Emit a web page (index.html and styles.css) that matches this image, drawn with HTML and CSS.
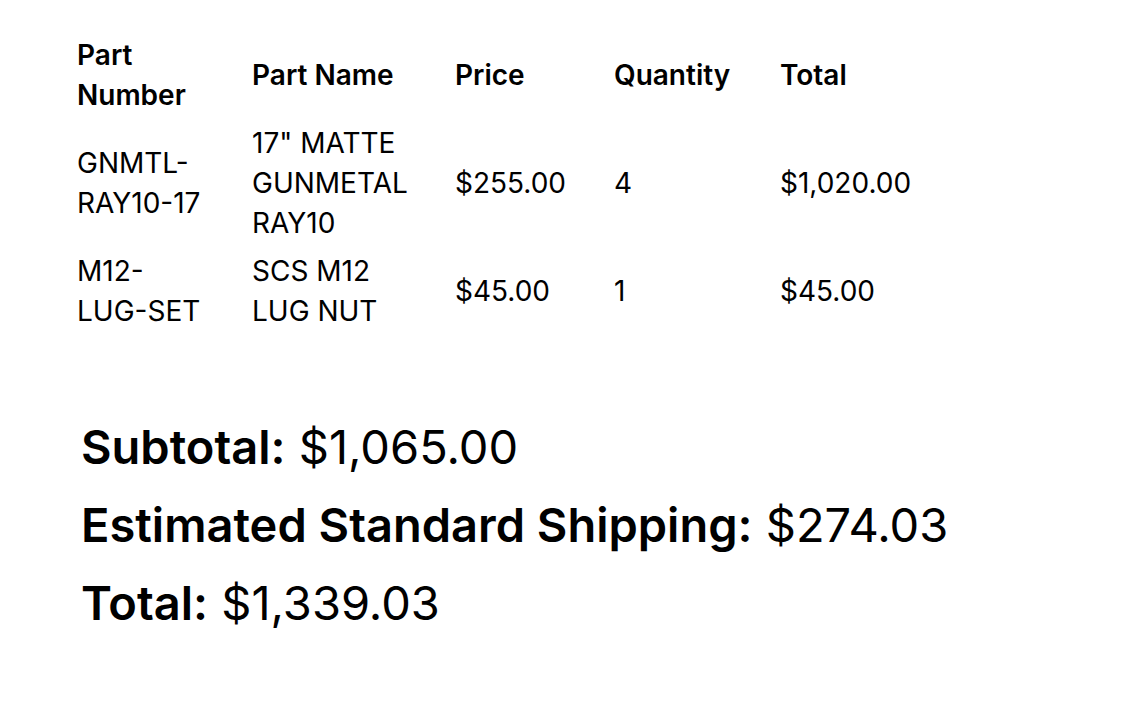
FILE: index.html
```html
<!DOCTYPE html>
<html lang="en">
<head>
    <meta charset="UTF-8">
    <meta name="viewport" content="width=device-width, initial-scale=1.0">
    <title>Order Summary</title>
    <link rel="stylesheet" href="styles.css">
</head>
<body>
    <div class="order">
        <table class="parts-table">
            <colgroup>
                <col class="col-number">
                <col class="col-name">
                <col class="col-price">
                <col class="col-qty">
                <col class="col-total">
            </colgroup>
            <thead>
                <tr>
                    <th>Part Number</th>
                    <th>Part Name</th>
                    <th>Price</th>
                    <th>Quantity</th>
                    <th>Total</th>
                </tr>
            </thead>
            <tbody>
                <tr>
                    <td>GNMTL-RAY10-17</td>
                    <td>17" MATTE GUNMETAL RAY10</td>
                    <td>$255.00</td>
                    <td>4</td>
                    <td>$1,020.00</td>
                </tr>
                <tr>
                    <td>M12-LUG-SET</td>
                    <td>SCS M12 LUG NUT</td>
                    <td>$45.00</td>
                    <td>1</td>
                    <td>$45.00</td>
                </tr>
            </tbody>
        </table>

        <div class="summary">
            <p class="summary-line"><strong>Subtotal:</strong> $1,065.00</p>
            <p class="summary-line"><strong>Estimated Standard Shipping:</strong> $274.03</p>
            <p class="summary-line"><strong>Total:</strong> $1,339.03</p>
        </div>
    </div>
</body>
</html>
```

FILE: styles.css
```css
* {
    margin: 0;
    padding: 0;
    box-sizing: border-box;
}

body {
    font-family: 'Inter', 'Liberation Sans', sans-serif;
    background-color: #ffffff;
    color: #000000;
}

.order {
    padding: 30px 0 0 75px;
}

.parts-table {
    table-layout: fixed;
    width: 880px;
    border-spacing: 2px;
    font-size: 28px;
    line-height: 40px;
}

.col-number {
    width: 173px;
}

.col-name {
    width: 201px;
}

.col-price {
    width: 157px;
}

.col-qty {
    width: 164px;
}

.parts-table th,
.parts-table td {
    text-align: left;
    vertical-align: middle;
    padding: 3px 40px 3px 0;
}

.parts-table th {
    font-weight: 600;
}

.summary {
    margin-top: 83px;
    padding-left: 6px;
}

.summary-line {
    font-size: 47px;
    line-height: 56px;
    margin-bottom: 22px;
}

.summary-line strong {
    font-weight: 600;
}
```
